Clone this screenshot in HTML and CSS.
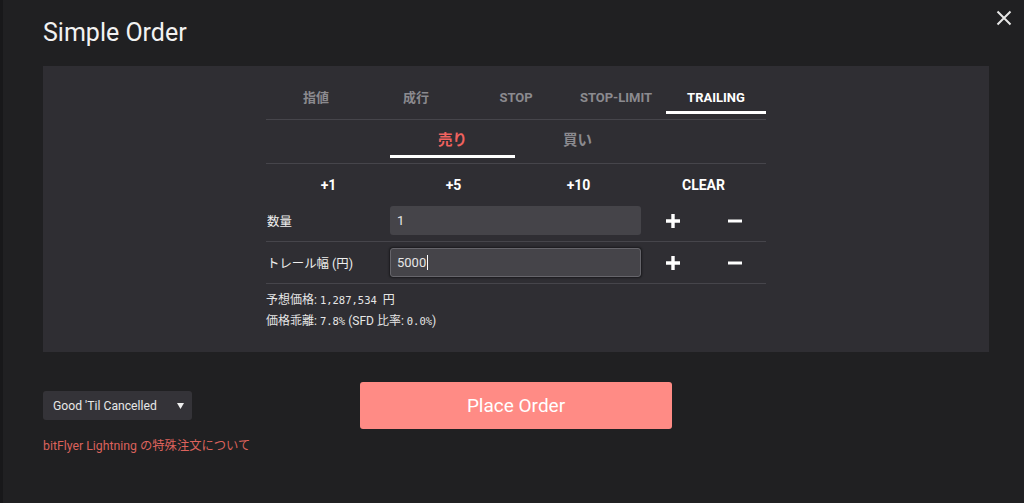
FILE: index.html
```html
<!DOCTYPE html>
<html lang="ja">
<head>
<meta charset="utf-8">
<title>Simple Order</title>
<link rel="stylesheet" href="styles.css">
</head>
<body>
<div class="page">
  <header class="header">
    <h1 class="title">Simple Order</h1>
    <button class="close" aria-label="close">
      <svg width="16" height="16" viewBox="0 0 16 16"><path d="M1.5 1.5 L14.5 14.5 M14.5 1.5 L1.5 14.5" stroke="#e6e6e6" stroke-width="2" fill="none"/></svg>
    </button>
  </header>

  <section class="panel">
    <div class="inner">
      <nav class="tabs">
        <div class="tab">指値</div>
        <div class="tab">成行</div>
        <div class="tab">STOP</div>
        <div class="tab">STOP-LIMIT</div>
        <div class="tab active">TRAILING</div>
      </nav>

      <div class="sides">
        <div class="side sell">売り</div>
        <div class="side">買い</div>
      </div>

      <div class="quick">
        <div class="qbtn">+1</div>
        <div class="qbtn">+5</div>
        <div class="qbtn">+10</div>
        <div class="qbtn">CLEAR</div>
      </div>

      <div class="row">
        <div class="label">数量</div>
        <div class="input">1</div>
        <div class="step"><svg width="14" height="14" viewBox="0 0 14 14"><path d="M7 0 V14 M0 7 H14" stroke="#fff" stroke-width="3.4"/></svg></div>
        <div class="step"><svg width="14" height="14" viewBox="0 0 14 14"><path d="M0 7 H14" stroke="#fff" stroke-width="3"/></svg></div>
      </div>

      <div class="row">
        <div class="label">トレール幅 (円)</div>
        <div class="input focus">5000<span class="caret"></span></div>
        <div class="step"><svg width="14" height="14" viewBox="0 0 14 14"><path d="M7 0 V14 M0 7 H14" stroke="#fff" stroke-width="3.4"/></svg></div>
        <div class="step"><svg width="14" height="14" viewBox="0 0 14 14"><path d="M0 7 H14" stroke="#fff" stroke-width="3"/></svg></div>
      </div>

      <div class="info">
        <div>予想価格: <span class="mono">1,287,534</span>&nbsp; 円</div>
        <div>価格乖離: <span class="mono">7.8%</span> (SFD 比率: <span class="mono">0.0%</span>)</div>
      </div>
    </div>
  </section>

  <section class="bottom">
    <div class="left">
      <div class="select"><span>Good 'Til Cancelled</span><svg class="arrow" width="7" height="6" viewBox="0 0 7 6"><path d="M0 0 H7 L3.5 6 Z" fill="#eee"/></svg></div>
      <a class="link">bitFlyer Lightning の特殊注文について</a>
    </div>
    <button class="place">Place Order</button>
  </section>
</div>
</body>
</html>
```

FILE: styles.css
```css
* { box-sizing: border-box; }
html, body { margin: 0; padding: 0; }
body {
  background: #202022;
  font-family: Roboto, "Noto Sans CJK JP", sans-serif;
  color: #fff;
  width: 1024px;
  height: 503px;
  overflow: hidden;
}
.page {
  position: relative;
  height: 503px;
  border-left: 3px solid #18181a;
  padding: 0 35px 0 40px;
}
.header {
  height: 66px;
  padding-top: 18px;
}
.title {
  margin: 0;
  font-size: 25px;
  line-height: 29px;
  font-weight: 400;
  color: #f2f2f2;
}
.close {
  position: absolute;
  top: 10px;
  right: 12px;
  width: 16px;
  height: 16px;
  padding: 0;
  border: 0;
  background: none;
  display: flex;
}
.panel {
  background: #2f2e33;
  height: 286px;
  padding-top: 18px;
}
.inner {
  width: 500px;
  margin: 0 auto;
}
.tabs {
  display: grid;
  grid-template-columns: repeat(5, 100px);
  border-bottom: 1px solid #46454b;
  padding-bottom: 5px;
}
.tab {
  text-align: center;
  font-size: 13px;
  font-weight: 700;
  line-height: 20px;
  padding-top: 4px;
  padding-bottom: 3px;
  border-bottom: 3px solid transparent;
  color: #8b8a8f;
}
.tab.active {
  color: #fff;
  border-bottom-color: #fff;
}
.sides {
  display: grid;
  grid-template-columns: 125px 125px;
  padding-left: 124px;
  padding-top: 11px;
  padding-bottom: 5px;
  border-bottom: 1px solid #46454b;
}
.side {
  text-align: center;
  font-size: 14.5px;
  font-weight: 700;
  line-height: 20px;
  padding-bottom: 4px;
  border-bottom: 3px solid transparent;
  color: #8b8a8f;
}
.side.sell {
  color: #f0625f;
  border-bottom-color: #fff;
}
.quick {
  display: grid;
  grid-template-columns: repeat(4, 125px);
  padding-top: 11px;
  padding-bottom: 5px;
}
.qbtn {
  text-align: center;
  font-size: 14px;
  font-weight: 700;
  line-height: 20px;
  color: #fff;
}
.row {
  display: grid;
  grid-template-columns: 124px 251px 63px 62px;
  align-items: center;
  padding: 6px 0;
  border-bottom: 1px solid #46454b;
}
.label {
  font-size: 12.4px;
  color: #eee;
  padding-left: 1px;
}
.input {
  height: 29px;
  background: #454449;
  border-radius: 3px;
  font-size: 13px;
  line-height: 29px;
  padding-left: 7px;
  color: #e6e6e6;
  display: flex;
  align-items: center;
}
.input.focus {
  border: 1px solid #66656b;
  box-shadow: 0 0 2px 1px rgba(0,0,0,0.45);
  padding-left: 6px;
}
.caret {
  display: inline-block;
  width: 1px;
  height: 15px;
  background: #fff;
  margin-left: 1px;
}
.step {
  display: flex;
  justify-content: center;
  align-items: center;
}
.info {
  padding-top: 6px;
  font-size: 12px;
  line-height: 21px;
  color: #e6e6e6;
}
.mono {
  font-family: "DejaVu Sans Mono", monospace;
  font-size: 10.5px;
}
.bottom {
  display: grid;
  grid-template-columns: 317px 312px;
  margin-top: 30px;
}
.left {
  padding-top: 9px;
  display: flex;
  flex-direction: column;
  align-items: flex-start;
}
.select {
  width: 149px;
  height: 29px;
  background: #343338;
  border-radius: 3px;
  display: flex;
  align-items: center;
  justify-content: space-between;
  padding: 0 8px 0 10px;
  font-size: 12.2px;
  color: #e6e6e6;
}
.arrow {
  display: block;
}
.link {
  margin-top: 17px;
  font-size: 12.3px;
  line-height: 18px;
  color: #dc625c;
}
.place {
  height: 47px;
  border: 0;
  border-radius: 3px;
  background: #ff8b85;
  color: #fff;
  font-family: Roboto, sans-serif;
  font-size: 19px;
  padding: 0;
}
```
